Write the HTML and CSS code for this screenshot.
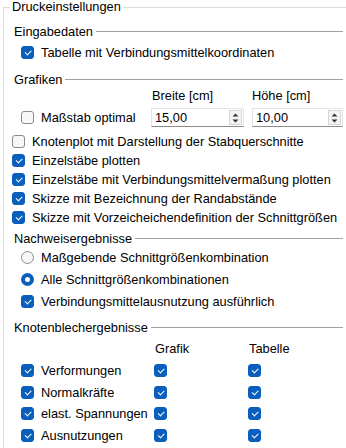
FILE: index.html
```html
<!DOCTYPE html>
<html lang="de">
<head>
<meta charset="utf-8">
<link rel="stylesheet" href="styles.css">
</head>
<body>
<fieldset class="main">
  <legend class="title">Druckeinstellungen</legend>

  <section class="sec sec-input">
    <div class="hdr"><span>Eingabedaten</span><i class="rule"></i></div>
    <div class="row row-20 ind"><span class="cb on"></span><span>Tabelle mit Verbindungsmittelkoordinaten</span></div>
  </section>

  <section class="sec sec-graf">
    <div class="hdr"><span>Grafiken</span><i class="rule"></i></div>
    <div class="dims">
      <div class="dlabel c2">Breite [cm]</div>
      <div class="dlabel c3">Höhe [cm]</div>
      <div class="row ind c1"><span class="cb"></span><span>Maßstab optimal</span></div>
      <div class="spin c2"><span class="val">15,00</span><span class="btn"><svg width="9" height="12" viewBox="0 0 9 12"><path d="M4.5 1.5 L7.5 4.5 L1.5 4.5 Z M1.5 7.5 L7.5 7.5 L4.5 10.5 Z" fill="#333"/></svg></span></div>
      <div class="spin c3"><span class="val">10,00</span><span class="btn"><svg width="9" height="12" viewBox="0 0 9 12"><path d="M4.5 1.5 L7.5 4.5 L1.5 4.5 Z M1.5 7.5 L7.5 7.5 L4.5 10.5 Z" fill="#333"/></svg></span></div>
    </div>
    <div class="list">
      <div class="row row-19"><span class="cb"></span><span>Knotenplot mit Darstellung der Stabquerschnitte</span></div>
      <div class="row row-19"><span class="cb on"></span><span>Einzelstäbe plotten</span></div>
      <div class="row row-19"><span class="cb on"></span><span>Einzelstäbe mit Verbindungsmittelvermaßung plotten</span></div>
      <div class="row row-19"><span class="cb on"></span><span>Skizze mit Bezeichnung der Randabstände</span></div>
      <div class="row row-19"><span class="cb on"></span><span>Skizze mit Vorzeicheichendefinition der Schnittgrößen</span></div>
    </div>
  </section>

  <section class="sec sec-nachweis">
    <div class="hdr"><span>Nachweisergebnisse</span><i class="rule"></i></div>
    <div class="row row-22 ind"><span class="rb"></span><span>Maßgebende Schnittgrößenkombination</span></div>
    <div class="row row-22 ind"><span class="rb on"></span><span>Alle Schnittgrößenkombinationen</span></div>
    <div class="row row-22 ind"><span class="cb on"></span><span>Verbindungsmittelausnutzung ausführlich</span></div>
  </section>

  <section class="sec sec-blech">
    <div class="hdr"><span>Knotenblechergebnisse</span><i class="rule"></i></div>
    <div class="grid">
      <div></div><div class="colh">Grafik</div><div class="colh">Tabelle</div>

      <div class="row"><span class="cb on"></span><span>Verformungen</span></div>
      <div class="cell"><span class="cb on"></span></div>
      <div class="cell"><span class="cb on"></span></div>

      <div class="row"><span class="cb on"></span><span>Normalkräfte</span></div>
      <div class="cell"><span class="cb on"></span></div>
      <div class="cell"><span class="cb on"></span></div>

      <div class="row"><span class="cb on"></span><span>elast. Spannungen</span></div>
      <div class="cell"><span class="cb on"></span></div>
      <div class="cell"><span class="cb on"></span></div>

      <div class="row"><span class="cb on"></span><span>Ausnutzungen</span></div>
      <div class="cell"><span class="cb on"></span></div>
      <div class="cell"><span class="cb on"></span></div>
    </div>
  </section>
</fieldset>
</body>
</html>
```

FILE: styles.css
```css
html, body {
  margin: 0;
  padding: 0;
  background: #ffffff;
}
body {
  width: 346px;
  height: 448px;
  overflow: hidden;
  font-family: "Liberation Sans", Arial, sans-serif;
  font-size: 12.8px;
  color: #000000;
}
.main {
  margin: 0 0 0 3px;
  padding: 0 0 0 10px;
  border: none;
  border-top: 1px solid #dcdcdc;
  border-left: 1px solid #dcdcdc;
  min-width: 0;
  height: 470px;
  box-sizing: border-box;
}
.title {
  margin-left: -4px;
  padding: 0 2px;
  line-height: 14px;
  height: 14px;
}
.sec {
  padding-right: 3px;
}
.hdr {
  display: flex;
  align-items: center;
  height: 16px;
  gap: 3px;
}
.hdr span {
  white-space: nowrap;
}
.rule {
  flex: 1;
  height: 1px;
  background: #a0a0a0;
}
.sec-input { padding-top: 9px; }
.sec-input .row-20 { margin-top: 3px; }
.sec-graf { margin-top: 9px; }
.sec-nachweis { margin-top: 3px; }
.sec-blech { margin-top: 7px; }

.row {
  display: flex;
  align-items: center;
  gap: 7px;
  white-space: nowrap;
}
.row-19 { height: 19px; }
.row-20 { height: 20px; }
.row-22 { height: 22px; }
.ind { padding-left: 7px; }
.list {
  margin-left: -2px;
  margin-top: 5px;
}
.sec-nachweis .row-22:first-of-type { margin-top: 1px; }

.cb {
  position: relative;
  flex: none;
  width: 13px;
  height: 13px;
  box-sizing: border-box;
  border: 1px solid #8a8a8a;
  border-radius: 3px;
  background: #f7f7f7;
}
.cb.on {
  border-color: #0a5fbd;
  background: #0a5fbd;
}
.cb.on::after {
  content: "";
  position: absolute;
  left: 3px;
  top: 3px;
  width: 5px;
  height: 2.5px;
  border-left: 1.2px solid #ffffff;
  border-bottom: 1.2px solid #ffffff;
  transform: rotate(-45deg);
}
.rb {
  flex: none;
  width: 13px;
  height: 13px;
  box-sizing: border-box;
  border: 1px solid #8a8a8a;
  border-radius: 50%;
  background: #f7f7f7;
}
.rb.on {
  border: 4px solid #0a5fbd;
  background: #ffffff;
}

.dims {
  display: grid;
  grid-template-columns: 129px 93px 91px;
  column-gap: 8px;
  grid-template-rows: 16px 19px;
  row-gap: 5px;
  align-items: center;
}
.c1 { grid-column: 1; grid-row: 2; }
.c2 { grid-column: 2; }
.c3 { grid-column: 3; }
.dlabel { grid-row: 1; padding-left: 1px; }
.dlabel.c3 { margin-left: -1px; }
.spin {
  grid-row: 2;
  height: 19px;
  box-sizing: border-box;
  display: flex;
  align-items: center;
  justify-content: space-between;
  border: 1px solid #e3e3e3;
  border-bottom-color: #8c8c8c;
  background: #ffffff;
  padding-left: 3px;
  padding-right: 1px;
}
.btn {
  display: flex;
  align-items: center;
  justify-content: center;
  width: 13px;
  height: 15px;
  box-sizing: border-box;
  border: 1px solid #d6d6d6;
  background: #f4f4f4;
}

.grid {
  margin-top: 3px;
  display: grid;
  grid-template-columns: 133px 94px 1fr;
  grid-auto-rows: 21.7px;
  align-items: center;
  padding-left: 7px;
}
.colh { padding-left: 1px; }
.cell { display: flex; align-items: center; }
```
